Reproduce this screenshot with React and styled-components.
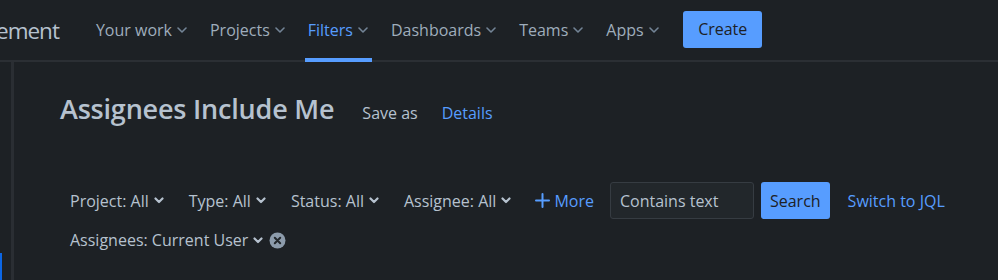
import React from 'react';
import styled, { createGlobalStyle } from 'styled-components';

const Global = createGlobalStyle`
  html, body {
    margin: 0;
    padding: 0;
    background: #1d2125;
  }
  body {
    font-family: "Open Sans", "Noto Sans", sans-serif;
    color: #b6c2cf;
    overflow: hidden;
  }
`;

const Page = styled.div`
  width: 998px;
  height: 280px;
  display: flex;
  flex-direction: column;
  background: #1d2125;
`;

const TopBar = styled.header`
  height: 60px;
  display: flex;
  align-items: stretch;
  border-bottom: 2px solid #2b2f34;
  flex-shrink: 0;
`;

const Brand = styled.div`
  display: flex;
  align-items: center;
  font-size: 22.5px;
  letter-spacing: -1px;
  color: #b6c2cf;
  margin-left: -4px;
  margin-right: 25.5px;
`;

const NavItem = styled.div`
  position: relative;
  display: flex;
  align-items: center;
  gap: 5px;
  padding: 0 11.5px;
  font-size: 16px;
  font-weight: 500;
  color: ${p => (p.$active ? '#579dff' : '#9fadbc')};

  &::after {
    content: '';
    display: ${p => (p.$active ? 'block' : 'none')};
    position: absolute;
    left: 9px;
    right: 7px;
    bottom: -2px;
    height: 4px;
    background: #579dff;
  }
`;

const CreateButton = styled.button`
  align-self: center;
  margin-left: 13px;
  margin-bottom: 2px;
  height: 37px;
  padding: 0 15px;
  border: none;
  border-radius: 3px;
  background: #579dff;
  color: #1d2125;
  font-family: inherit;
  font-size: 16px;
  font-weight: 500;
`;

const Body = styled.div`
  flex: 1;
  display: flex;
`;

const Sidebar = styled.aside`
  width: 11px;
  border-right: 3px solid #2a2e33;
  display: flex;
  flex-direction: column;
  justify-content: flex-end;
`;

const SideMark = styled.div`
  width: 2px;
  height: 27px;
  background: #0c66e4;
`;

const Main = styled.main`
  flex: 1;
  padding: 28px 0 0 46px;
`;

const TitleRow = styled.div`
  display: flex;
  align-items: baseline;
  gap: 28px;
`;

const Title = styled.h1`
  margin: 0;
  font-size: 27px;
  font-weight: 600;
  color: #b6c2cf;
  letter-spacing: -0.2px;
`;

const TitleLink = styled.span`
  font-size: 16px;
  color: ${p => (p.$blue ? '#579dff' : '#b6c2cf')};
  margin-left: ${p => (p.$blue ? '-4px' : '0')};
`;

const FilterRow = styled.div`
  display: flex;
  align-items: center;
  margin-top: ${p => p.$top || 0}px;
  padding-left: 10px;
  height: ${p => p.$height || 'auto'};
`;

const FilterItem = styled.div`
  display: flex;
  align-items: center;
  gap: 5px;
  margin-right: ${p => p.$gap ?? 25}px;
  font-size: 16px;
  color: #b6c2cf;
`;

const MoreLink = styled.div`
  display: flex;
  align-items: center;
  gap: 4px;
  font-size: 16px;
  color: #579dff;
  margin-right: 16px;
`;

const TextInput = styled.div`
  box-sizing: border-box;
  width: 144px;
  height: 37px;
  border: 1px solid #363c42;
  border-radius: 3px;
  background: #22272b;
  display: flex;
  align-items: center;
  padding-left: 9px;
  font-size: 16px;
  color: #b6c2cf;
  margin-right: 7px;
`;

const SearchButton = styled.button`
  height: 37px;
  padding: 0 9px;
  border: none;
  border-radius: 3px;
  background: #579dff;
  color: #1d2125;
  font-family: inherit;
  font-size: 16px;
  margin-right: 18px;
`;

const JqlLink = styled.span`
  font-size: 16px;
  color: #579dff;
`;

const ClearIcon = styled.span`
  display: inline-flex;
  margin-left: 1px;
`;

function NavChevron() {
  return (
    <svg width="10" height="6" viewBox="0 0 10 6">
      <path d="M1 1l4 4 4-4" fill="none" stroke="#738496" strokeWidth="1.6" strokeLinecap="round" strokeLinejoin="round" />
    </svg>
  );
}

function Chevron() {
  return (
    <svg width="10" height="7" viewBox="0 0 10 7">
      <path d="M1.5 1.5l3.5 3.5 3.5-3.5" fill="none" stroke="#b6c2cf" strokeWidth="2.2" strokeLinecap="round" strokeLinejoin="round" />
    </svg>
  );
}

function Plus() {
  return (
    <svg width="15" height="15" viewBox="0 0 15 15">
      <path d="M7.5 1v13M1 7.5h13" stroke="#579dff" strokeWidth="2" strokeLinecap="round" />
    </svg>
  );
}

function XCircle() {
  return (
    <svg width="17" height="17" viewBox="0 0 17 17">
      <circle cx="8.5" cy="8.5" r="8" fill="#8c9bab" />
      <path d="M5.8 5.8l5.4 5.4M11.2 5.8l-5.4 5.4" stroke="#22272b" strokeWidth="2" strokeLinecap="round" />
    </svg>
  );
}

const navItems = [
  { label: 'Your work' },
  { label: 'Projects' },
  { label: 'Filters', active: true },
  { label: 'Dashboards' },
  { label: 'Teams' },
  { label: 'Apps' },
];

const filters = [
  { label: 'Project: All' },
  { label: 'Type: All' },
  { label: 'Status: All' },
  { label: 'Assignee: All', gap: 24 },
];

export default function App() {
  return (
    <Page>
      <Global />
      <TopBar>
        <Brand>ement</Brand>
        {navItems.map(item => (
          <NavItem key={item.label} $active={item.active}>
            {item.label}
            <NavChevron />
          </NavItem>
        ))}
        <CreateButton>Create</CreateButton>
      </TopBar>
      <Body>
        <Sidebar>
          <SideMark />
        </Sidebar>
        <Main>
          <TitleRow>
            <Title>Assignees Include Me</Title>
            <TitleLink>Save as</TitleLink>
            <TitleLink $blue>Details</TitleLink>
          </TitleRow>
          <FilterRow $top={55} $height="37px">
            {filters.map(f => (
              <FilterItem key={f.label} $gap={f.gap}>
                {f.label}
                <Chevron />
              </FilterItem>
            ))}
            <MoreLink>
              <Plus />
              More
            </MoreLink>
            <TextInput>Contains text</TextInput>
            <SearchButton>Search</SearchButton>
            <JqlLink>Switch to JQL</JqlLink>
          </FilterRow>
          <FilterRow $top={10}>
            <FilterItem $gap={0}>
              Assignees: Current User
              <Chevron />
              <ClearIcon>
                <XCircle />
              </ClearIcon>
            </FilterItem>
          </FilterRow>
        </Main>
      </Body>
    </Page>
  );
}
